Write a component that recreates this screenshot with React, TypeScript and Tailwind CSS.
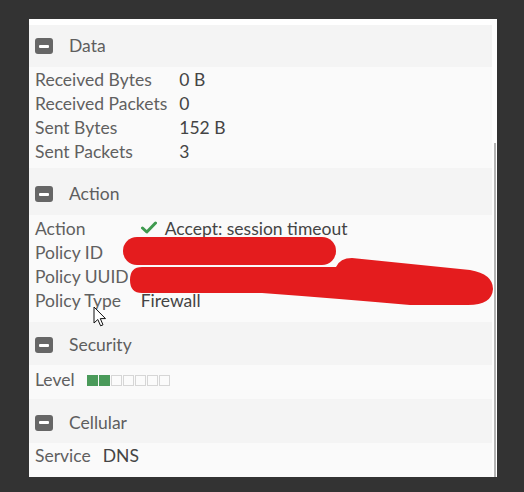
import type { ReactNode } from 'react';

type Row = { label: string; value: ReactNode };

const font = { fontFamily: 'Lato, "Open Sans", sans-serif' };

// minus-square toggle icon used in each section header
function MinusBox() {
  return (
    <div className="w-[18px] h-[16px] rounded-[3px] bg-[#666666] flex items-center justify-center shrink-0">
      <div className="w-[10px] h-[3px] bg-white rounded-[1px]" />
    </div>
  );
}

function SectionHeader({ title, height, pt }: { title: string; height: string; pt: string }) {
  return (
    <div className={`${height} ${pt} bg-[#f4f4f4] flex items-center pl-[6px] gap-[16px]`}>
      <MinusBox />
      <span className="text-[17.5px] text-[#5e5e5e] leading-none">{title}</span>
    </div>
  );
}

function RowTable({ rows, height, pt }: { rows: Row[]; height: string; pt: string }) {
  return (
    <div className={`${height} ${pt} bg-[#fafafa] pl-[6px]`}>
      <table className="border-collapse">
        <tbody>
          {rows.map((r) => (
            <tr key={r.label} className="h-[24px]">
              <td className="pr-[12px] text-[17.5px] leading-[24px] text-[#606060] whitespace-nowrap p-0 align-middle">
                {r.label}
              </td>
              <td className="text-[17.5px] leading-[24px] text-[#444444] whitespace-nowrap p-0 align-middle">
                {r.value}
              </td>
            </tr>
          ))}
        </tbody>
      </table>
    </div>
  );
}

function LevelBar({ level, total }: { level: number; total: number }) {
  return (
    <div className="flex gap-[1px] items-center h-[24px]">
      {Array.from({ length: total }).map((_, i) => (
        <div
          key={i}
          className={
            i < level
              ? 'w-[11px] h-[11px] bg-[#4a9a5a] border border-[#4a9a5a]'
              : 'w-[11px] h-[11px] bg-[#fbfbfb] border border-[#d6d6d6]'
          }
        />
      ))}
    </div>
  );
}

function Check() {
  return (
    <svg width="16" height="13" viewBox="0 0 16 13" className="inline-block mr-[8px] -mt-[3px]">
      <path d="M1.5 7 L5.8 11 L14.5 2" fill="none" stroke="#3f9a4f" strokeWidth="3" strokeLinecap="round" strokeLinejoin="round" />
    </svg>
  );
}

export default function App() {
  const dataRows: Row[] = [
    { label: 'Received Bytes', value: '0 B' },
    { label: 'Received Packets', value: '0' },
    { label: 'Sent Bytes', value: '152 B' },
    { label: 'Sent Packets', value: '3' },
  ];

  const actionRows: Row[] = [
    {
      label: 'Action',
      value: (
        <span className="inline-flex items-center">
          <Check />
          Accept: session timeout
        </span>
      ),
    },
    { label: 'Policy ID', value: '' },
    { label: 'Policy UUID', value: '' },
    { label: 'Policy Type', value: 'Firewall' },
  ];

  return (
    <div className="relative w-[524px] h-[492px] bg-[#333333] pt-[19px] pl-[29px]" style={font}>
      <div className="relative w-[468px] h-[458px] bg-white pt-[6px] pr-[5px]">
        <SectionHeader title="Data" height="h-[42px]" pt="pt-0" />
        <RowTable rows={dataRows} height="h-[101px]" pt="pt-[1px]" />

        <SectionHeader title="Action" height="h-[47px]" pt="pt-[5px]" />
        <RowTable rows={actionRows} height="h-[107px]" pt="pt-[1px]" />

        <SectionHeader title="Security" height="h-[43px]" pt="pt-[3px]" />
        <RowTable
          rows={[{ label: 'Level', value: <LevelBar level={2} total={7} /> }]}
          height="h-[34px]"
          pt="pt-[3px]"
        />

        <SectionHeader title="Cellular" height="h-[44px]" pt="pt-[3px]" />
        <RowTable rows={[{ label: 'Service', value: 'DNS' }]} height="h-[34px]" pt="pt-[1px]" />

        {/* scrollbar edge */}
        <div className="absolute right-[1px] top-[124px] bottom-0 w-[2px] bg-[#b4b4b4]" />
      </div>

      {/* red redaction marks and mouse cursor drawn over the panel */}
      <svg className="absolute inset-0 pointer-events-none" width="524" height="492" viewBox="0 0 524 492">
        <rect x="123" y="237" width="213" height="28" rx="14" fill="#e41c1e" />
        <path
          d="M142 267 L336 267 Q340 258 352 258 L470 270 Q493 274 493 289 Q492 305 468 305 L410 305 Q330 298 262 293 L142 293 Q130 293 130 280 Q130 267 142 267 Z"
          fill="#e41c1e"
        />
        <path
          d="M94 307 L94 323 L97.8 319.5 L100.6 325.8 L103 324.8 L100.3 318.6 L105.5 318.6 Z"
          fill="#ffffff"
          stroke="#111111"
          strokeWidth="1"
          strokeLinejoin="round"
        />
      </svg>
    </div>
  );
}
